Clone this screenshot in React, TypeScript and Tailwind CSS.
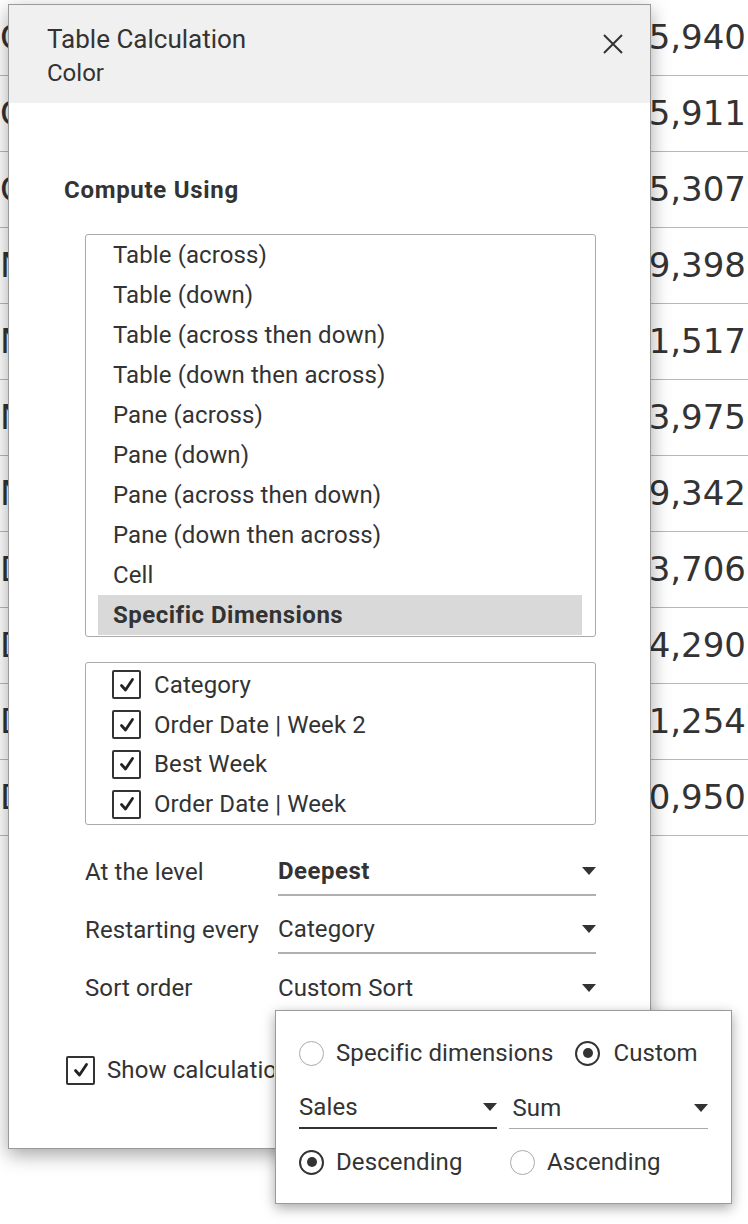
import React from 'react';

const tableRows: [string, string][] = [
  ['C', '5,940'],
  ['C', '5,911'],
  ['C', '5,307'],
  ['N', '9,398'],
  ['N', '1,517'],
  ['N', '3,975'],
  ['N', '9,342'],
  ['D', '3,706'],
  ['D', '4,290'],
  ['D', '1,254'],
  ['D', '0,950'],
];

const computeOptions = [
  'Table (across)',
  'Table (down)',
  'Table (across then down)',
  'Table (down then across)',
  'Pane (across)',
  'Pane (down)',
  'Pane (across then down)',
  'Pane (down then across)',
  'Cell',
  'Specific Dimensions',
];

const dimensions = ['Category', 'Order Date | Week 2', 'Best Week', 'Order Date | Week'];

const Caret = () => (
  <svg width="14" height="8" viewBox="0 0 14 8" className="shrink-0">
    <polygon points="0,0 14,0 7,8" fill="#333" />
  </svg>
);

const Checkbox = () => (
  <span className="flex h-[29px] w-[29px] shrink-0 items-center justify-center rounded-[2px] border-2 border-[#333] bg-white">
    <svg width="18" height="18" viewBox="0 0 18 18">
      <path d="M3.5 9.5 L7.5 14 L14.5 3.5" fill="none" stroke="#222" strokeWidth="2.8" strokeLinecap="round" strokeLinejoin="round" />
    </svg>
  </span>
);

const Radio = ({ checked }: { checked?: boolean }) =>
  checked ? (
    <span className="flex h-[25px] w-[25px] shrink-0 items-center justify-center rounded-full border-2 border-[#333]">
      <span className="h-[10px] w-[10px] rounded-full bg-[#333]" />
    </span>
  ) : (
    <span className="h-[25px] w-[25px] shrink-0 rounded-full border-[1.5px] border-[#aaa]" />
  );

const SettingRow = ({ label, value, bold, underline = true }: { label: string; value: string; bold?: boolean; underline?: boolean }) => (
  <div className="flex h-[48px] items-stretch">
    <div className="flex w-[193px] items-center whitespace-nowrap">{label}</div>
    <div className={`flex w-[318px] items-center justify-between ${underline ? 'border-b-2 border-[#b0b0b0]' : ''}`}>
      <span className={bold ? 'font-bold tracking-[0.5px]' : ''}>{value}</span>
      <Caret />
    </div>
  </div>
);

export default function App() {
  return (
    <div className="relative h-[1224px] w-[748px] overflow-hidden bg-white text-[#333]">
      {/* background worksheet */}
      <div className="font-['DejaVu_Sans',sans-serif] text-[34px] text-[#333]">
        {tableRows.map(([dim, val], i) => (
          <div key={i} className="flex h-[76px] items-center justify-between border-b border-[#b8b8b8] pr-[2px]">
            <span className="w-[8px] overflow-hidden">{dim}</span>
            <span>{val}</span>
          </div>
        ))}
      </div>

      {/* Table Calculation dialog */}
      <div className="absolute left-[8px] top-[4px] flex h-[1145px] w-[643px] flex-col border border-[#9a9a9a] bg-white font-['Roboto',sans-serif] shadow-[0_6px_18px_rgba(0,0,0,0.35)]">
        <div className="flex h-[98px] shrink-0 items-start justify-between bg-[#f0f0f0] pl-[38px] pr-[27px] pt-[19px]">
          <div>
            <div className="text-[26px] leading-[30px] text-[#333]">Table Calculation</div>
            <div className="mt-[5px] text-[24px] leading-[28px] text-[#333]">Color</div>
          </div>
          <svg width="20" height="20" viewBox="0 0 20 20" className="mt-[10px]">
            <path d="M1 1 L19 19 M19 1 L1 19" stroke="#333" strokeWidth="2" />
          </svg>
        </div>

        <div className="flex flex-col pl-[55px] text-[24px] tracking-[0.1px] text-[#333]">
          <h2 className="mt-[72px] text-[24px] font-bold leading-[30px] tracking-[0.7px]">Compute Using</h2>

          <div className="ml-[21px] mt-[29px] h-[403px] w-[511px] rounded-[3px] border border-[#aaa] pl-[12px] pr-[13px]">
            {computeOptions.map((opt, i) => (
              <div
                key={opt}
                className={`flex h-[40px] items-center pl-[15px] ${i === computeOptions.length - 1 ? 'bg-[#d9d9d9] font-bold tracking-[0.5px]' : ''}`}
              >
                {opt}
              </div>
            ))}
          </div>

          <div className="ml-[21px] mt-[25px] flex h-[163px] w-[511px] flex-col rounded-[3px] border border-[#aaa] pl-[26px] pt-[2px]">
            {dimensions.map((d) => (
              <div key={d} className="flex h-[40px] items-center gap-[13px]">
                <Checkbox />
                <span>{d}</span>
              </div>
            ))}
          </div>

          <div className="ml-[21px] mt-[23px] flex flex-col gap-[10px]">
            <SettingRow label="At the level" value="Deepest" bold />
            <SettingRow label="Restarting every" value="Category" />
            <SettingRow label="Sort order" value="Custom Sort" underline={false} />
          </div>

          <div className="ml-[2px] mt-[40px] flex items-center gap-[12px] whitespace-nowrap">
            <Checkbox />
            <span className="w-[167px] overflow-hidden">Show calculation assistance</span>
          </div>
        </div>
      </div>

      {/* custom sort popup */}
      <div className="absolute left-[275px] top-[1010px] flex h-[194px] w-[457px] flex-col border border-[#9a9a9a] bg-white px-[23px] pt-[28px] font-['Roboto',sans-serif] text-[24px] tracking-[0.1px] text-[#333] shadow-[0_4px_12px_rgba(0,0,0,0.35)]">
        <div className="flex h-[28px] items-center whitespace-nowrap">
          <div className="flex items-center gap-[12px]">
            <Radio />
            <span>Specific dimensions</span>
          </div>
          <div className="ml-[22px] flex items-center gap-[13px]">
            <Radio checked />
            <span>Custom</span>
          </div>
        </div>
        <div className="mt-[20px] flex gap-[12px]">
          <div className="flex h-[42px] w-[200px] items-center justify-between border-b-2 border-[#333]">
            <span>Sales</span>
            <Caret />
          </div>
          <div className="flex h-[42px] w-[200px] items-center justify-between border-b border-[#aaa] pl-[3px]">
            <span>Sum</span>
            <Caret />
          </div>
        </div>
        <div className="mt-[19px] flex h-[28px] items-center">
          <div className="flex w-[211px] items-center gap-[12px]">
            <Radio checked />
            <span>Descending</span>
          </div>
          <div className="flex items-center gap-[12px]">
            <Radio />
            <span>Ascending</span>
          </div>
        </div>
      </div>
    </div>
  );
}
